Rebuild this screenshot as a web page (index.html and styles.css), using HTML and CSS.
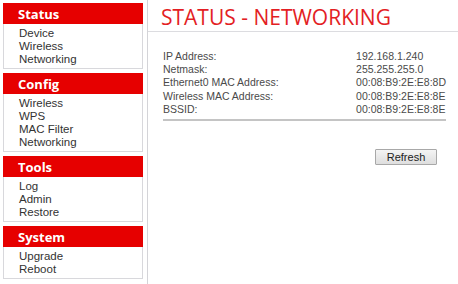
FILE: index.html
```html
<!DOCTYPE html>
<html>
<head>
<meta charset="utf-8">
<link rel="stylesheet" href="styles.css">
</head>
<body>
<div class="page">
  <nav class="sidebar">
    <div class="section">
      <div class="section-title">Status</div>
      <ul class="links">
        <li>Device</li>
        <li>Wireless</li>
        <li>Networking</li>
      </ul>
    </div>
    <div class="section">
      <div class="section-title">Config</div>
      <ul class="links">
        <li>Wireless</li>
        <li>WPS</li>
        <li>MAC Filter</li>
        <li>Networking</li>
      </ul>
    </div>
    <div class="section">
      <div class="section-title">Tools</div>
      <ul class="links">
        <li>Log</li>
        <li>Admin</li>
        <li>Restore</li>
      </ul>
    </div>
    <div class="section">
      <div class="section-title">System</div>
      <ul class="links">
        <li>Upgrade</li>
        <li>Reboot</li>
      </ul>
    </div>
  </nav>
  <main class="content">
    <header class="header">
      <h1 class="title">STATUS - NETWORKING</h1>
    </header>
    <div class="body">
      <table class="info">
        <tr><td class="label">IP Address:</td><td class="value">192.168.1.240</td></tr>
        <tr><td class="label">Netmask:</td><td class="value">255.255.255.0</td></tr>
        <tr><td class="label">Ethernet0 MAC Address:</td><td class="value">00:08:B9:2E:E8:8D</td></tr>
        <tr><td class="label">Wireless MAC Address:</td><td class="value">00:08:B9:2E:E8:8E</td></tr>
        <tr><td class="label">BSSID:</td><td class="value">00:08:B9:2E:E8:8E</td></tr>
      </table>
      <div class="actions">
        <button class="btn">Refresh</button>
      </div>
    </div>
  </main>
</div>
</body>
</html>
```

FILE: styles.css
```css
html, body {
  margin: 0;
  padding: 0;
  background: #fff;
}
.page {
  display: flex;
  width: 458px;
  height: 284px;
  overflow: hidden;
  font-family: "Liberation Sans", Arial, sans-serif;
}
.sidebar {
  width: 144px;
  padding: 3px 0 0 3px;
  border-right: 1px solid #d4d4d8;
  display: flex;
  flex-direction: column;
  gap: 4px;
  flex-shrink: 0;
}
.section {
  width: 140px;
  box-sizing: border-box;
  border: 1px solid #d8d8dc;
  border-top: none;
}
.section-title {
  background: #e60000;
  color: #fff;
  font-family: "Open Sans", sans-serif;
  font-weight: 700;
  font-size: 13px;
  height: 21px;
  line-height: 22px;
  padding-left: 15px;
  margin: 0 -1px;
}
.links {
  list-style: none;
  margin: 0;
  padding: 3px 0 2px 15px;
  font-size: 11.5px;
  line-height: 13px;
  color: #333;
}
.content {
  flex: 1;
  display: flex;
  flex-direction: column;
}
.header {
  height: 32px;
  border-bottom: 1px solid #dcdce0;
  box-sizing: border-box;
  padding-left: 13px;
}
.title {
  margin: 0;
  font-family: "Open Sans", sans-serif;
  font-weight: 400;
  font-size: 21px;
  line-height: 34px;
  color: #e31e24;
  letter-spacing: 0;
}
.body {
  padding: 18px 13px 0 15px;
}
.info {
  border-collapse: collapse;
  width: 283px;
  border-bottom: 2px solid #c4c4c4;
  font-size: 10.5px;
  color: #4a4a4a;
}
.info td {
  padding: 0;
  height: 13.2px;
  line-height: 13px;
}
.info tr:last-child td {
  padding-bottom: 3px;
}
.label {
  width: 195px;
}
.actions {
  display: flex;
  justify-content: flex-end;
  width: 274px;
  margin-top: 28px;
}
.btn {
  font-family: "Liberation Sans", Arial, sans-serif;
  font-size: 11px;
  color: #222;
  width: 62px;
  height: 16px;
  padding: 0;
  border: 1px solid #a8a8a8;
  background: linear-gradient(#f4f4f4, #dedede);
  border-radius: 1px;
}
```
